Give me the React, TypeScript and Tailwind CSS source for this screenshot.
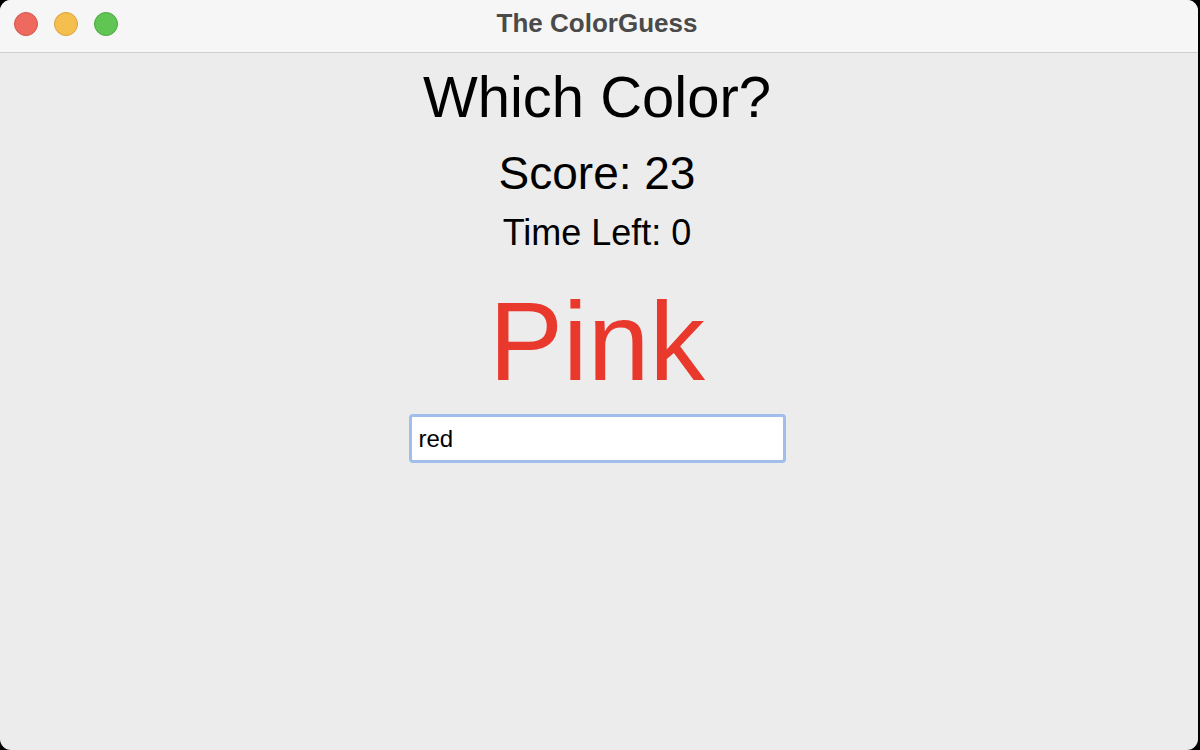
import React from "react";

export default function App() {
  const font = { fontFamily: '"Liberation Sans", Arial, sans-serif' };
  return (
    <div className="w-[1200px] h-[750px] bg-black" style={font}>
      <div className="w-[1198px] h-[750px] rounded-[11px] overflow-hidden bg-[#ececec] flex flex-col">
        <div className="h-[53px] shrink-0 bg-[#f6f6f6] border-b border-[#d0d0d0] relative flex items-center justify-center">
          <div className="absolute left-[14px] top-[12px] flex gap-[16px]">
            <div className="w-[24px] h-[24px] rounded-full bg-[#ee6a5f] border border-[#d4574c]" />
            <div className="w-[24px] h-[24px] rounded-full bg-[#f5bf4f] border border-[#d9a23a]" />
            <div className="w-[24px] h-[24px] rounded-full bg-[#61c554] border border-[#4ca83f]" />
          </div>
          <div className="text-[26px] leading-[26px] font-bold text-[#4a4a4a] mb-[6px] mr-[4px]">The ColorGuess</div>
        </div>
        <div className="flex flex-col items-center text-black pr-[4px]">
          <div className="mt-[15px] text-[58px] leading-[58px]">Which Color?</div>
          <div className="mt-[24px] text-[46px] leading-[46px]">Score: 23</div>
          <div className="mt-[19px] text-[36px] leading-[36px]">Time Left: 0</div>
          <div className="mt-[36px] text-[111px] leading-[111px] text-[#e9382c]">Pink</div>
          <div className="mt-[16px] w-[377px] h-[49px] rounded-[4px] border-[3px] border-[#9fbfea] bg-white flex items-center pl-[7px]">
            <span className="text-[24px] leading-[24px] text-black">red</span>
          </div>
        </div>
      </div>
    </div>
  );
}
